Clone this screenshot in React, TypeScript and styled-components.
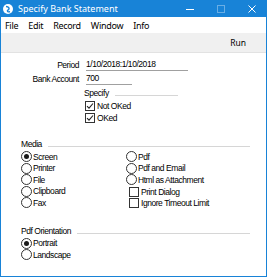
import React from 'react';
import styled, { createGlobalStyle } from 'styled-components';

const GlobalStyle = createGlobalStyle`
  html, body {
    margin: 0;
    padding: 0;
    background: #ffffff;
  }
`;

const Window = styled.div`
  width: 267px;
  height: 277px;
  box-sizing: border-box;
  border: 1px solid #1883d7;
  border-top: none;
  display: flex;
  flex-direction: column;
  background: #ffffff;
  overflow: hidden;
`;

const TitleBar = styled.div`
  height: 17px;
  margin: 0 -1px;
  background: #1883d7;
  display: flex;
  align-items: center;
  color: #ffffff;
  font-family: 'Noto Sans', 'Open Sans', sans-serif;
  font-size: 9px;
`;

const AppIcon = styled.svg`
  width: 10px;
  height: 10px;
  margin: 0 5px 0 3px;
`;

const Title = styled.span`
  flex: 1;
`;

const WinButton = styled.div<{ $dim?: boolean }>`
  width: 31px;
  height: 17px;
  display: flex;
  align-items: center;
  justify-content: center;
  opacity: ${p => (p.$dim ? 0.35 : 1)};
`;

const MenuBar = styled.div`
  height: 16px;
  display: flex;
  align-items: center;
  gap: 10px;
  padding-left: 4px;
  font-family: 'Noto Sans', 'Open Sans', sans-serif;
  font-size: 9px;
  letter-spacing: -0.3px;
  color: #000000;
`;

const Toolbar = styled.div`
  height: 19px;
  background: #f0f0f0;
  border-bottom: 1px solid #e2e2e2;
  display: flex;
  align-items: center;
  justify-content: flex-end;
  padding-right: 20px;
  font-family: 'Noto Sans', 'Open Sans', sans-serif;
  font-size: 8.5px;
  color: #000000;
`;

const Content = styled.div`
  flex: 1;
  padding-top: 5px;
  font-family: 'Liberation Sans', 'Arial', sans-serif;
  font-size: 8.5px;
  letter-spacing: -0.45px;
  color: #000000;
`;

const FieldGrid = styled.div`
  display: grid;
  grid-template-columns: 78px auto;
  grid-auto-rows: 14px;
  column-gap: 7px;
  align-items: center;
`;

const Label = styled.div`
  text-align: right;
`;

const Field = styled.div<{ $width: number }>`
  width: ${p => p.$width}px;
  height: 11px;
  line-height: 11px;
  border-bottom: 1px solid #a0a0a0;
`;

const Group = styled.div<{ $indent: number }>`
  margin-left: ${p => p.$indent}px;
`;

const Header = styled.div<{ $lineWidth?: number }>`
  height: 14px;
  display: flex;
  align-items: center;
  gap: 6px;

  &::after {
    content: '';
    height: 1px;
    margin-top: 5px;
    background: #d6d6d6;
    ${p => (p.$lineWidth ? `width: ${p.$lineWidth}px;` : 'flex: 1; margin-right: 16px;')}
  }
`;

const CheckRow = styled.div<{ $inset?: number }>`
  height: 12px;
  display: flex;
  align-items: center;
  gap: 2px;
  padding-left: ${p => p.$inset ?? 0}px;
`;

const Box = styled.span`
  width: 10px;
  height: 10px;
  box-sizing: border-box;
  border: 1px solid #333333;
  display: inline-flex;
  align-items: center;
  justify-content: center;
  background: #ffffff;
`;

const OptionGrid = styled.div`
  display: grid;
  grid-template-columns: 105px auto;
  grid-auto-flow: column;
  grid-template-rows: repeat(5, 11.5px);
`;

const SingleColumn = styled.div`
  display: grid;
  grid-auto-rows: 11.5px;
`;

const RadioRow = styled.div`
  display: flex;
  align-items: center;
  gap: 1px;
`;

const Circle = styled.span<{ $on?: boolean }>`
  width: 11px;
  height: 11px;
  box-sizing: border-box;
  border: 1px solid #333333;
  border-radius: 50%;
  display: inline-flex;
  align-items: center;
  justify-content: center;

  &::after {
    content: '';
    width: 5px;
    height: 5px;
    border-radius: 50%;
    background: ${p => (p.$on ? '#1a1a1a' : 'transparent')};
  }
`;

const Section = styled.div<{ $top: number }>`
  margin-top: ${p => p.$top}px;
  padding-left: 20px;
`;

const Check: React.FC<{ checked?: boolean; label: string; inset?: number }> = ({ checked, label, inset }) => (
  <CheckRow $inset={inset}>
    <Box>
      {checked && (
        <svg width="8" height="8" viewBox="0 0 8 8">
          <path d="M1 4.2 L3 6.2 L7 1.5" fill="none" stroke="#222" strokeWidth="1.1" />
        </svg>
      )}
    </Box>
    <span>{label}</span>
  </CheckRow>
);

const Radio: React.FC<{ on?: boolean; label: string }> = ({ on, label }) => (
  <RadioRow>
    <Circle $on={on} />
    <span>{label}</span>
  </RadioRow>
);

export default function App() {
  return (
    <>
      <GlobalStyle />
      <Window>
        <TitleBar>
          <AppIcon viewBox="0 0 10 10">
            <circle cx="5" cy="5" r="5" fill="#ffffff" />
            <path d="M3 2.5 C6 2.5 7 5 5 6 C3.5 6.8 5 8.5 7 7.5" fill="none" stroke="#1883d7" strokeWidth="1.4" />
          </AppIcon>
          <Title>Specify Bank Statement</Title>
          <WinButton>
            <svg width="8" height="8" viewBox="0 0 8 8">
              <path d="M0 4.5 H8" stroke="#fff" strokeWidth="1" />
            </svg>
          </WinButton>
          <WinButton $dim>
            <svg width="8" height="8" viewBox="0 0 8 8">
              <rect x="0.5" y="0.5" width="7" height="7" fill="none" stroke="#fff" strokeWidth="1" />
            </svg>
          </WinButton>
          <WinButton>
            <svg width="8" height="8" viewBox="0 0 8 8">
              <path d="M0.5 0.5 L7.5 7.5 M7.5 0.5 L0.5 7.5" stroke="#fff" strokeWidth="1" />
            </svg>
          </WinButton>
        </TitleBar>
        <MenuBar>
          <span>File</span>
          <span>Edit</span>
          <span>Record</span>
          <span>Window</span>
          <span>Info</span>
        </MenuBar>
        <Toolbar>Run</Toolbar>
        <Content>
          <FieldGrid>
            <Label>Period</Label>
            <Field $width={102}>1/10/2018:1/10/2018</Field>
            <Label>Bank Account</Label>
            <Field $width={46}>700</Field>
          </FieldGrid>
          <Group $indent={83}>
            <Header $lineWidth={63}>Specify</Header>
            <Check checked label="Not OKed" inset={1} />
            <Check checked label="OKed" inset={1} />
          </Group>
          <Section $top={13}>
            <Header>Media</Header>
            <OptionGrid>
              <Radio on label="Screen" />
              <Radio label="Printer" />
              <Radio label="File" />
              <Radio label="Clipboard" />
              <Radio label="Fax" />
              <Radio label="Pdf" />
              <Radio label="Pdf and Email" />
              <Radio label="Html as Attachment" />
              <Check label="Print Dialog" inset={3} />
              <Check label="Ignore Timeout Limit" inset={3} />
            </OptionGrid>
          </Section>
          <Section $top={15}>
            <Header>Pdf Orientation</Header>
            <SingleColumn>
              <Radio on label="Portrait" />
              <Radio label="Landscape" />
            </SingleColumn>
          </Section>
        </Content>
      </Window>
    </>
  );
}
